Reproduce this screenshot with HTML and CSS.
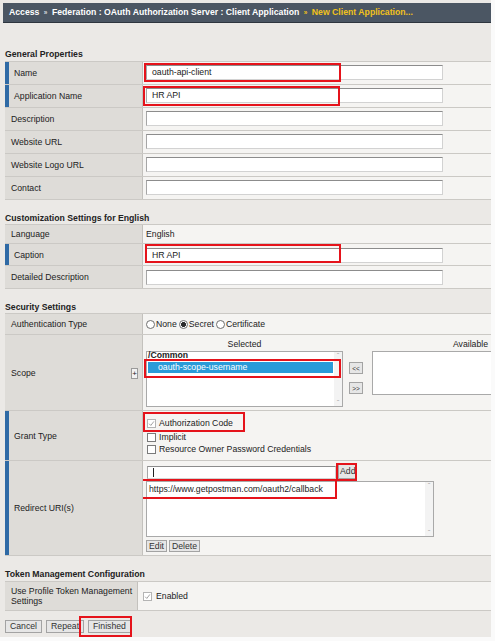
FILE: index.html
```html
<!DOCTYPE html>
<html lang="en">
<head>
  <meta charset="UTF-8">
  <title>New Client Application</title>
  <link rel="stylesheet" href="styles.css">
</head>
<body>
  <div class="page">
    <div class="crumbs">Access <span class="sep">»</span> Federation : OAuth Authorization Server : Client Application <span class="sep cur">»</span> <span class="cur">New Client Application...</span></div>

    <h2 class="section first">General Properties</h2>
    <div class="form">
      <div class="row req">
        <div class="label">Name</div>
        <div class="value"><span class="text">oauth-api-client</span><span class="hl hl-name"></span></div>
      </div>
      <div class="row req">
        <div class="label">Application Name</div>
        <div class="value"><span class="text">HR API</span><span class="hl hl-app"></span></div>
      </div>
      <div class="row">
        <div class="label">Description</div>
        <div class="value"><span class="text"></span></div>
      </div>
      <div class="row">
        <div class="label">Website URL</div>
        <div class="value"><span class="text"></span></div>
      </div>
      <div class="row">
        <div class="label">Website Logo URL</div>
        <div class="value"><span class="text"></span></div>
      </div>
      <div class="row">
        <div class="label">Contact</div>
        <div class="value"><span class="text"></span></div>
      </div>
    </div>

    <h2 class="section">Customization Settings for English</h2>
    <div class="form">
      <div class="row">
        <div class="label">Language</div>
        <div class="value plain">English</div>
      </div>
      <div class="row req">
        <div class="label">Caption</div>
        <div class="value caption"><span class="text">HR API</span><span class="hl hl-caption"></span></div>
      </div>
      <div class="row">
        <div class="label">Detailed Description</div>
        <div class="value detail"><span class="text"></span></div>
      </div>
    </div>

    <h2 class="section">Security Settings</h2>
    <div class="form">
      <div class="row">
        <div class="label">Authentication Type</div>
        <div class="value radios">
          <span class="radio"></span>None
          <span class="radio on"></span>Secret
          <span class="radio"></span>Certificate
        </div>
      </div>
      <div class="row">
        <div class="label">Scope <span class="plus">+</span></div>
        <div class="value scope">
          <div class="pick">
            <div class="pick-title">Selected</div>
            <div class="listbox">
              <div class="group">/Common</div>
              <div class="option sel">oauth-scope-username</div>
              <div class="scroll"><span>&#710;</span><span>&#711;</span></div>
            </div>
          </div>
          <div class="movers">
            <span class="btn small">&lt;&lt;</span>
            <span class="btn small">&gt;&gt;</span>
          </div>
          <div class="pick">
            <div class="pick-title">Available</div>
            <div class="listbox short"></div>
          </div>
          <span class="hl hl-scope"></span>
        </div>
      </div>
      <div class="row req">
        <div class="label">Grant Type</div>
        <div class="value grants">
          <div class="check-line first"><span class="check on"><svg viewBox="0 0 9 9"><path d="M1.5 4.8 L3.6 7 L7.6 1.8"/></svg></span>Authorization Code</div>
          <div class="check-line"><span class="check"></span>Implicit</div>
          <div class="check-line"><span class="check"></span>Resource Owner Password Credentials</div>
          <span class="hl hl-grant"></span>
        </div>
      </div>
      <div class="row req">
        <div class="label">Redirect URI(s)</div>
        <div class="value redirect">
          <div class="add-line"><span class="text uri"><span class="caret"></span></span><span class="btn add">Add</span></div>
          <div class="uris">
            <div class="uri-item">https://www.getpostman.com/oauth2/callback</div>
            <div class="scroll"><span>&#710;</span><span>&#711;</span></div>
          </div>
          <div class="edit-line"><span class="btn">Edit</span><span class="btn">Delete</span></div>
          <span class="hl hl-add"></span>
          <span class="hl hl-uri"></span>
        </div>
      </div>
    </div>

    <h2 class="section token-title">Token Management Configuration</h2>
    <div class="form token">
      <div class="row">
        <div class="label">Use Profile Token Management Settings</div>
        <div class="value enabled"><span class="check on"><svg viewBox="0 0 9 9"><path d="M1.5 4.8 L3.6 7 L7.6 1.8"/></svg></span>Enabled</div>
      </div>
    </div>

    <div class="actions">
      <span class="btn">Cancel</span>
      <span class="btn">Repeat</span>
      <span class="btn">Finished</span>
      <span class="hl hl-finish"></span>
    </div>
  </div>
</body>
</html>
```

FILE: styles.css
```css
body {
  margin: 0;
  background: #fafafa;
  font-family: "Liberation Sans", Arial, sans-serif;
  font-size: 8.7px;
  color: #222;
}
.page {
  width: 491px;
  height: 637px;
  background: #ebe9e6;
  overflow: hidden;
}
.crumbs {
  margin: 3px 0 0 3px;
  height: 19px;
  line-height: 19px;
  padding-left: 6px;
  background: #4b5663;
  border-bottom: 1px solid #2d353e;
  color: #fff;
  font-weight: bold;
  white-space: nowrap;
}
.crumbs .sep {
  font-size: 6.5px;
  color: #d6dade;
  margin: 0 2px;
}
.crumbs .cur {
  color: #f2c21b;
}
.section {
  margin: 0;
  padding: 13px 0 1px 5px;
  font-size: 8.7px;
  line-height: 10px;
  font-weight: bold;
}
.section.first {
  padding-top: 26px;
  padding-bottom: 2px;
}
.section.token-title {
  padding-top: 13px;
  padding-bottom: 2px;
}
.form {
  margin-left: 5px;
  width: 486px;
  border-top: 1px solid #cbc9c5;
}
.row {
  display: grid;
  grid-template-columns: 138px 1fr;
  border-bottom: 1px solid #cbc9c5;
}
.label {
  position: relative;
  display: flex;
  align-items: center;
  padding-left: 6px;
  background: #dedcd8;
  border-right: 1px solid #c3c1bd;
}
.row.req .label {
  border-left: 4px solid #2f6aa5;
  padding-left: 5px;
}
.value {
  position: relative;
  box-sizing: border-box;
  height: 22px;
  padding: 3px 0 0 3px;
  background: #f5f4f2;
  overflow: hidden;
}
.text {
  display: block;
  box-sizing: border-box;
  width: 297px;
  height: 15px;
  line-height: 13px;
  padding-left: 5px;
  background: #fff;
  border: 1px solid #d2d2d2;
  border-top-color: #8c8c8c;
  border-left-color: #a6a6a6;
}
.value.plain {
  height: 18px;
  line-height: 12px;
}
.value.caption {
  height: 21px;
  padding-top: 4px;
}
.value.detail {
  height: 22px;
  padding-top: 4px;
}
.hl {
  position: absolute;
  box-sizing: border-box;
  border: 2px solid #e5131b;
}
.hl-name { left: 1px; top: 1px; width: 197px; height: 19px; }
.hl-app { left: 0; top: 1px; width: 197px; height: 20px; }
.hl-caption { left: 2px; top: 0; width: 196px; height: 19px; }

/* security */
.radios {
  display: flex;
  align-items: center;
  height: 20px;
  padding-top: 0;
}
.radio {
  display: inline-block;
  box-sizing: border-box;
  width: 9px;
  height: 9px;
  margin: 0 1px 0 0;
  border: 1px solid #6f6f6f;
  border-radius: 50%;
  background: #fff;
}
.radio ~ .radio {
  margin-left: 2px;
}
.radio.on {
  background: radial-gradient(circle, #2b2b2b 0 2.2px, #fff 2.7px);
}
.plus {
  position: absolute;
  right: 4px;
  top: 33px;
  box-sizing: border-box;
  width: 7px;
  height: 11px;
  line-height: 9px;
  text-align: center;
  font-size: 8px;
  background: #f2f2f2;
  border: 1px solid #9a9a9a;
}
.scope {
  display: flex;
  gap: 6px;
  height: 75px;
  padding-top: 4px;
}
.pick {
  width: 197px;
  flex-shrink: 0;
}
.pick-title {
  text-align: center;
  height: 12px;
  line-height: 10px;
}
.listbox {
  position: relative;
  box-sizing: border-box;
  height: 56px;
  padding: 0 9px 0 1px;
  background: #fff;
  border: 1px solid #a9a9a9;
}
.listbox.short {
  height: 44px;
}
.group {
  font-weight: bold;
  line-height: 7px;
}
.option {
  line-height: 11px;
  margin-top: 3px;
  padding-left: 10px;
}
.option.sel {
  background: #2a9bd8;
  color: #fff;
}
.scroll {
  position: absolute;
  right: 0;
  top: 0;
  bottom: 0;
  width: 8px;
  display: flex;
  flex-direction: column;
  justify-content: space-between;
  align-items: center;
  background: #f3f3f3;
  color: #a8a8a8;
  font-size: 8px;
  line-height: 7px;
}
.movers {
  display: flex;
  flex-direction: column;
  gap: 8px;
  padding-top: 23px;
  margin-right: 3px;
  flex-shrink: 0;
}
.btn {
  display: inline-block;
  box-sizing: border-box;
  height: 13px;
  line-height: 11px;
  padding: 0 3px;
  background: #e6e6e6;
  border: 1px solid #a3a3a3;
  color: #333;
}
.btn.small {
  width: 14px;
  height: 12px;
  padding: 0;
  font-size: 6.5px;
  text-align: center;
}
.hl-scope { left: 1px; top: 24px; width: 197px; height: 19px; }

.grants {
  height: 49px;
  padding: 5px 0 0 4px;
}
.check-line {
  display: flex;
  align-items: center;
  height: 12px;
}
.check-line.first {
  height: 14px;
  margin-bottom: 1px;
}
.check {
  display: inline-block;
  box-sizing: border-box;
  width: 9px;
  height: 9px;
  margin-right: 3px;
  background: #fff;
  border: 1px solid #7a7a7a;
}
.check.on {
  border-color: #b4b4b4;
}
.check svg {
  display: block;
  width: 7px;
  height: 7px;
}
.check path {
  fill: none;
  stroke: #9c9c9c;
  stroke-width: 1.2;
}
.hl-grant { left: 0; top: 1px; width: 102px; height: 20px; }

.redirect {
  height: 94px;
  padding-top: 3px;
}
.add-line {
  display: flex;
  align-items: flex-end;
}
.text.uri {
  width: 189px;
  height: 13px;
  margin-left: 1px;
}
.caret {
  display: block;
  width: 1px;
  height: 9px;
  margin: 1px 0 0 0;
  background: #222;
}
.btn.add {
  height: 15px;
  margin-left: 2px;
  padding: 0 1px;
  line-height: 13px;
}
.uris {
  position: relative;
  box-sizing: border-box;
  width: 288px;
  height: 56px;
  margin-top: 2px;
  padding: 2px 0 0 2px;
  background: #fff;
  border: 1px solid #a9a9a9;
}
.edit-line {
  display: flex;
  gap: 2px;
  margin-top: 3px;
}
.edit-line .btn {
  height: 12px;
  line-height: 10px;
  padding: 0 2px;
}
.hl-add { left: 193px; top: 2px; width: 21px; height: 18px; }
.hl-uri { left: -3px; top: 18px; width: 197px; height: 20px; }

/* token management */
.token .row {
  grid-template-columns: 133px 1fr;
}
.token .label {
  line-height: 10px;
  padding-right: 2px;
}
.enabled {
  display: flex;
  align-items: center;
  height: 28px;
  padding: 0 0 0 5px;
}
.enabled .check {
  margin-right: 4px;
}
.actions {
  position: relative;
  display: flex;
  gap: 4px;
  margin: 9px 0 0 5px;
}
.actions .btn {
  height: 13px;
  padding: 0 4px;
}
.actions .btn:last-of-type {
  margin-left: 2px;
  padding: 0 5px;
}
.hl-finish { left: 74px; top: -4px; width: 53px; height: 21px; }
```
